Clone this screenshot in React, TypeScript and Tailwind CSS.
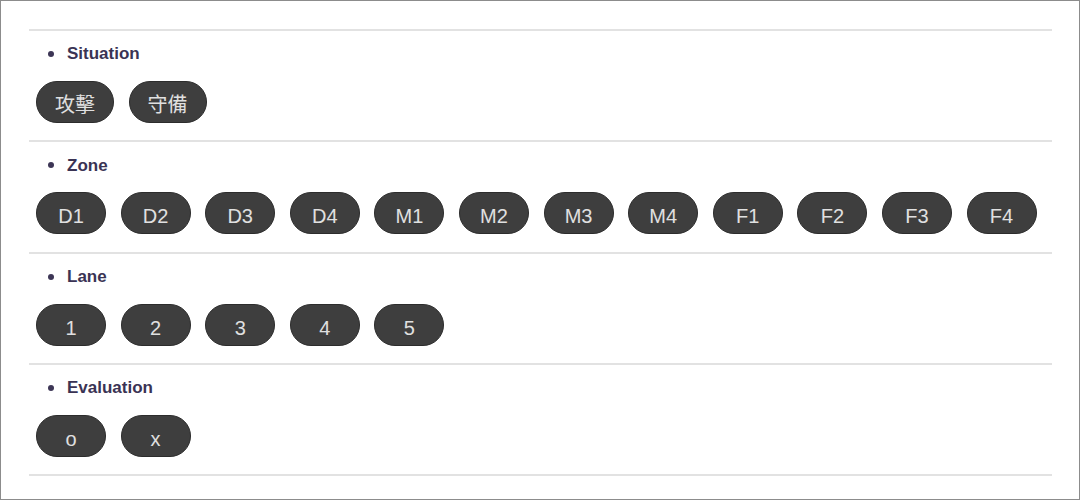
import React from "react";

const sections: { title: string; items: string[] }[] = [
  { title: "Situation", items: ["攻擊", "守備"] },
  { title: "Zone", items: ["D1", "D2", "D3", "D4", "M1", "M2", "M3", "M4", "F1", "F2", "F3", "F4"] },
  { title: "Lane", items: ["1", "2", "3", "4", "5"] },
  { title: "Evaluation", items: ["o", "x"] },
];

export default function App() {
  return (
    <div
      className="w-[1080px] h-[500px] box-border border border-[#8c8c8c] bg-white overflow-hidden"
      style={{ fontFamily: '"Liberation Sans", "Noto Sans CJK TC", Arial, sans-serif' }}
    >
      <div className="ml-[28px] mr-[27px] mt-[28px] border-b-2 border-[#e2e2e2]">
        {sections.map((s) => (
          <div key={s.title} className="border-t-2 border-[#e2e2e2] pt-[11px] pb-[17.25px]">
            <div className="flex items-center h-[24px] pl-[19px]">
              <span className="w-[6px] h-[6px] rounded-full bg-[#3d3656] mr-[13px]" />
              <span className="text-[17px] font-bold text-[#3a3354]">{s.title}</span>
            </div>
            <div className="flex gap-[14.6px] mt-[15px] pl-[7px]">
              {s.items.map((it) => (
                <div
                  key={it}
                  className="h-[42px] min-w-[70px] px-[18px] pt-[6px] box-border rounded-full bg-[#3e3e3e] border border-[#2c2c2c] flex items-center justify-center text-[20px] text-[#e0e0e0]"
                >
                  {it}
                </div>
              ))}
            </div>
          </div>
        ))}
      </div>
    </div>
  );
}
